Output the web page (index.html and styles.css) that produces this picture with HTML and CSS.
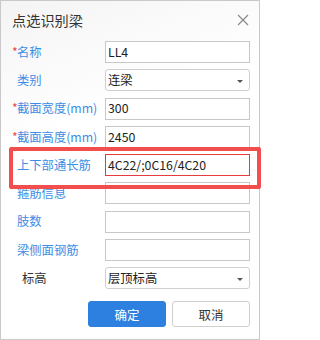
FILE: index.html
```html
<!DOCTYPE html>
<html lang="zh-CN">
<head>
<meta charset="utf-8">
<link rel="stylesheet" href="styles.css">
</head>
<body>
<div class="dialog">
  <div class="header">
    <span class="title">点选识别梁</span>
    <svg class="close" width="12" height="12" viewBox="0 0 12 12"><path d="M1 1L11 11M11 1L1 11" stroke="#8a8a8a" stroke-width="1.2" fill="none"/></svg>
  </div>
  <div class="form">
    <div class="label"><span class="req">*</span>名称</div>
    <div class="field">LL4</div>
    <div class="label ind">类别</div>
    <div class="field select">连梁<span class="caret"></span></div>
    <div class="label"><span class="req">*</span>截面宽度(mm)</div>
    <div class="field">300</div>
    <div class="label"><span class="req">*</span>截面高度(mm)</div>
    <div class="field">2450</div>
    <div class="label ind">上下部通长筋</div>
    <div class="field hot">4C22/;0C16/4C20</div>
    <div class="label ind">箍筋信息</div>
    <div class="field"></div>
    <div class="label ind">肢数</div>
    <div class="field"></div>
    <div class="label ind">梁侧面钢筋</div>
    <div class="field"></div>
    <div class="label plain">标高</div>
    <div class="field select">层顶标高<span class="caret"></span></div>
  </div>
  <div class="actions">
    <div class="btn primary">确定</div>
    <div class="btn">取消</div>
  </div>
  <div class="mark"></div>
</div>
</body>
</html>
```
FILE: styles.css
```css
html, body {
  margin: 0;
  padding: 0;
  background: #ffffff;
}
body {
  font-family: "Noto Sans CJK SC", "Noto Sans", sans-serif;
  color: #333;
}
.dialog {
  position: relative;
  width: 258px;
  height: 338px;
  border: 1px solid #c9c9c9;
  background: linear-gradient(160deg, #f4f4f4 0%, #ffffff 35%, #ffffff 100%);
}
.header {
  height: 40px;
  display: flex;
  align-items: center;
  justify-content: space-between;
  padding: 0 10px 0 11px;
  box-sizing: border-box;
}
.title {
  font-size: 14.2px;
  color: #333;
  line-height: 1;
  margin-top: -1px;
}
.close {
  margin-top: -2px;
}
.form {
  display: grid;
  grid-template-columns: 93px 145px;
  grid-auto-rows: 22px;
  row-gap: 6.25px;
  padding-left: 11px;
}
.label {
  font-size: 12.3px;
  color: #3d8de6;
  display: flex;
  align-items: center;
  white-space: nowrap;
  line-height: 1;
}
.label.ind {
  padding-left: 5px;
}
.label.plain {
  color: #333;
  padding-left: 10px;
}
.req {
  color: #e64040;
  width: 5px;
  display: inline-block;
}
.field {
  border: 1px solid #c8c8c8;
  box-sizing: border-box;
  background: #fff;
  font-size: 12.3px;
  color: #222;
  display: flex;
  align-items: center;
  padding-left: 2px;
  line-height: 1;
  position: relative;
}
.field.select {
  border-radius: 3px;
  border-color: #cfcfcf;
}
.field.hot {
  border-color: #e63c3c;
}
.caret {
  position: absolute;
  right: 6px;
  top: 10px;
  width: 0;
  height: 0;
  border-left: 3px solid transparent;
  border-right: 3px solid transparent;
  border-top: 3px solid #555;
}
.actions {
  display: flex;
  justify-content: flex-end;
  gap: 6px;
  margin-top: 12px;
  padding-right: 9px;
}
.btn {
  width: 78px;
  height: 26px;
  box-sizing: border-box;
  border: 1px solid #cfcfcf;
  border-radius: 3px;
  background: #fff;
  font-size: 12.5px;
  color: #333;
  display: flex;
  align-items: center;
  justify-content: center;
}
.btn.primary {
  background: #2d80e0;
  border-color: #2d80e0;
  color: #fff;
}
.mark {
  position: absolute;
  left: 8px;
  top: 146px;
  width: 244px;
  height: 34px;
  border: 4.5px solid #f24e4e;
  border-radius: 2px;
}
```
